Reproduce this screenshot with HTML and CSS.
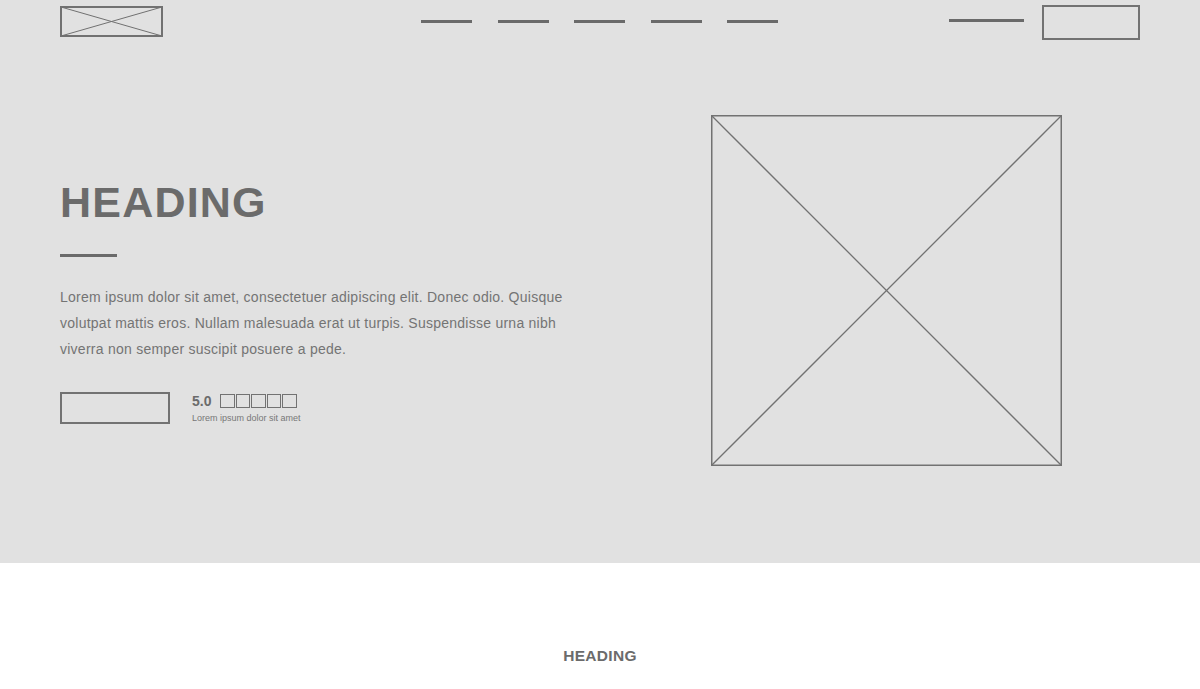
FILE: index.html
```html
<!DOCTYPE html>
<html>
<head>
<meta charset="utf-8">
<link rel="stylesheet" href="styles.css">
</head>
<body>
<section class="hero">
  <header class="topbar">
    <div class="logo">
      <svg width="103" height="31" viewBox="0 0 103 31"><rect x="1" y="1" width="101" height="29" fill="none" stroke="#717171" stroke-width="2"/><line x1="1" y1="1" x2="102" y2="30" stroke="#717171" stroke-width="1"/><line x1="102" y1="1" x2="1" y2="30" stroke="#717171" stroke-width="1"/></svg>
    </div>
    <nav class="nav">
      <span class="nav-line"></span>
      <span class="nav-line"></span>
      <span class="nav-line"></span>
      <span class="nav-line"></span>
      <span class="nav-line"></span>
    </nav>
    <div class="actions">
      <span class="login-line"></span>
      <span class="cta-box"></span>
    </div>
  </header>
  <div class="hero-body">
    <div class="hero-text">
      <h1 class="title">HEADING</h1>
      <div class="rule"></div>
      <p class="lead">Lorem ipsum dolor sit amet, consectetuer adipiscing elit. Donec odio. Quisque volutpat mattis eros. Nullam malesuada erat ut turpis. Suspendisse urna nibh viverra non semper suscipit posuere a pede.</p>
      <div class="cta-row">
        <span class="btn"></span>
        <div class="rating">
          <div class="rating-top">
            <span class="score">5.0</span>
            <span class="stars"><i></i><i></i><i></i><i></i><i></i></span>
          </div>
          <div class="rating-cap">Lorem ipsum dolor sit amet</div>
        </div>
      </div>
    </div>
    <div class="hero-img">
      <svg width="351" height="351" viewBox="0 0 351 351"><rect x="0.75" y="0.75" width="349.5" height="349.5" fill="none" stroke="#727272" stroke-width="1.5"/><line x1="1" y1="1" x2="350" y2="350" stroke="#727272" stroke-width="1.3"/><line x1="350" y1="1" x2="1" y2="350" stroke="#727272" stroke-width="1.3"/></svg>
    </div>
  </div>
</section>
<section class="second">
  <h2 class="sub-title">HEADING</h2>
</section>
</body>
</html>
```
FILE: styles.css
```css
* { box-sizing: border-box; }
html, body { margin: 0; padding: 0; }
body {
  font-family: "Liberation Sans", Arial, sans-serif;
  color: #6f6f6f;
  background: #ffffff;
  overflow: hidden;
}
.hero {
  background: #e1e1e1;
  height: 563px;
}
.topbar {
  height: 44px;
  display: flex;
  align-items: flex-start;
  padding: 0 60px;
  position: relative;
}
.logo {
  padding-top: 6px;
  height: 37px;
}
.logo svg { display: block; }
.nav {
  display: flex;
  gap: 25.5px;
  margin-left: 258px;
  padding-top: 20px;
}
.nav-line {
  display: block;
  width: 51px;
  height: 3px;
  background: #6a6a6a;
}
.actions {
  margin-left: auto;
  display: flex;
  align-items: flex-start;
  gap: 18px;
}
.login-line {
  display: block;
  width: 75px;
  height: 3px;
  background: #6a6a6a;
  margin-top: 19px;
}
.cta-box {
  display: block;
  width: 98px;
  height: 35px;
  margin-top: 5px;
  border: 2px solid #727272;
}
.hero-body {
  display: flex;
  justify-content: space-between;
  align-items: flex-start;
  padding: 71px 138px 0 60px;
}
.hero-text {
  width: 520px;
  padding-top: 66px;
}
.title {
  margin: 0;
  font-size: 43px;
  line-height: 43px;
  font-weight: 700;
  letter-spacing: 1.2px;
  color: #6b6b6b;
}
.rule {
  width: 57px;
  height: 3px;
  background: #6a6a6a;
  margin-top: 30px;
}
.lead {
  margin: 27px 0 0;
  font-size: 14px;
  line-height: 26px;
  letter-spacing: 0.25px;
  color: #747474;
}
.cta-row {
  display: flex;
  align-items: flex-start;
  gap: 22px;
  margin-top: 30px;
}
.btn {
  display: block;
  width: 110px;
  height: 32px;
  border: 2px solid #727272;
}
.rating {
  padding-top: 1px;
}
.rating-top {
  display: flex;
  align-items: flex-end;
  gap: 9px;
}
.score {
  font-size: 14px;
  font-weight: 700;
  line-height: 16px;
  color: #6b6b6b;
}
.stars {
  display: flex;
  gap: 1px;
  padding-bottom: 1px;
}
.stars i {
  display: block;
  width: 14.5px;
  height: 14px;
  border: 1.5px solid #727272;
}
.rating-cap {
  font-size: 9px;
  line-height: 10px;
  margin-top: 4px;
  color: #777;
}
.hero-img svg { display: block; }
.second {
  height: 126px;
  text-align: center;
  padding-top: 85px;
}
.sub-title {
  margin: 0;
  font-size: 15.5px;
  line-height: 16px;
  font-weight: 700;
  color: #6b6b6b;
  letter-spacing: 0.3px;
}
```
